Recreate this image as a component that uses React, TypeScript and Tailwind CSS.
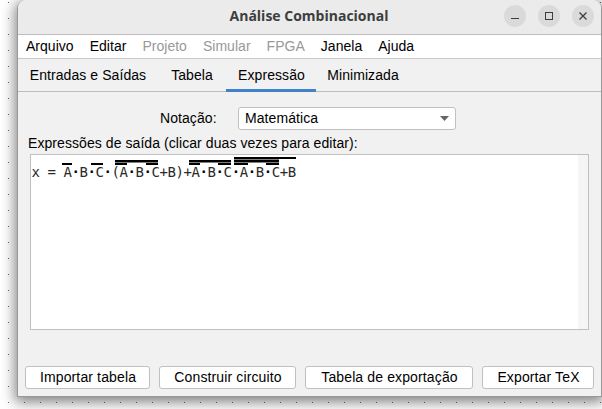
import type { ReactNode } from "react";

const menus = [
  { label: "Arquivo", enabled: true },
  { label: "Editar", enabled: true },
  { label: "Projeto", enabled: false },
  { label: "Simular", enabled: false },
  { label: "FPGA", enabled: false },
  { label: "Janela", enabled: true },
  { label: "Ajuda", enabled: true },
];

const tabs = [
  { label: "Entradas e Saídas", width: "w-[140px]", active: false },
  { label: "Tabela", width: "w-[68px]", active: false },
  { label: "Expressão", width: "w-[90px]", active: true },
  { label: "Minimizada", width: "w-[94px]", active: false },
];

const buttons = [
  { label: "Importar tabela", width: "w-[125px]" },
  { label: "Construir circuito", width: "w-[137px]" },
  { label: "Tabela de exportação", width: "w-[168px]" },
  { label: "Exportar TeX", width: "w-[112px]" },
];

const expression = "x = A·B·C·(A·B·C+B)+A·B·C·A·B·C+B";

// Negation bars: [x, y, width], relative to the expression line
const bars: [number, number, number][] = [
  [31, 8, 10],
  [60, 8, 12],
  [84, 5, 43],
  [84, 8, 12],
  [115, 8, 12],
  [158, 5, 42],
  [158, 8, 11],
  [187, 8, 13],
  [203, 2, 62],
  [203, 5, 45],
  [203, 8, 14],
  [235, 8, 13],
];

function Grid() {
  return (
    <svg className="absolute inset-0" width="602" height="409" shapeRendering="crispEdges">
      <defs>
        <pattern id="dots" width="16" height="16" patternUnits="userSpaceOnUse">
          <rect x="8" y="2" width="1" height="1" fill="#666" />
        </pattern>
      </defs>
      <rect width="602" height="409" fill="url(#dots)" />
    </svg>
  );
}

function WindowButton({ children }: { children: ReactNode }) {
  return (
    <button className="flex size-[22px] items-center justify-center rounded-full bg-[#dadada]">
      <svg width="22" height="22" fill="none" stroke="#3d3d3d">
        {children}
      </svg>
    </button>
  );
}

function Expression() {
  return (
    <div className="relative h-[30px] whitespace-pre pl-[0.4px] pt-[9px] font-['DejaVu_Sans_Mono',monospace] text-[14px] leading-[16px] tracking-[-0.428px] text-[#2a2a2a]">
      {expression.split(/(·)/).map((part, i) =>
        part === "·" ? (
          <b key={i} className="text-black">
            ·
          </b>
        ) : (
          part
        ),
      )}
      <svg className="absolute left-0 top-0" width="300" height="12" shapeRendering="crispEdges">
        <rect x="84" y="7" width="43" height="1" fill="#808080" />
        <rect x="158" y="7" width="42" height="1" fill="#808080" />
        <rect x="203" y="4" width="45" height="1" fill="#808080" />
        <rect x="203" y="7" width="45" height="1" fill="#808080" />
        {bars.map(([x, y, w], i) => (
          <rect key={i} x={x} y={y} width={w} height="2" fill="#000" />
        ))}
      </svg>
    </div>
  );
}

export default function App() {
  return (
    <div className="relative h-[409px] w-[602px] overflow-hidden bg-white pl-[17px] font-['Liberation_Sans',Arial,sans-serif] text-[14px] leading-[16px] tracking-[0.07px] text-black">
      <Grid />
      <div className="relative flex h-[397px] w-[585px] flex-col overflow-visible rounded-t-[9px] border border-t-0 border-[#989898] bg-[#f1f1f1] shadow-[0_3px_14px_2px_rgba(0,0,0,0.5)]">
        <header className="flex h-[35px] shrink-0 items-center rounded-t-[8px] border-b border-[#bdbdbd] bg-[#ebebeb] pb-[2px] pr-[7px]">
          <div className="w-[86px]" />
          <h1 className="flex-1 whitespace-nowrap pl-[10px] text-center font-['Open_Sans','Noto_Sans',sans-serif] text-[14px] font-bold tracking-normal text-[#3d3d3d]">
            Análise Combinacional
          </h1>
          <div className="flex gap-3">
            <WindowButton>
              <path d="M7 13.5h8" />
            </WindowButton>
            <WindowButton>
              <rect x="7.5" y="7.5" width="7" height="7" />
            </WindowButton>
            <WindowButton>
              <path d="M7.5 7.5l7 7M14.5 7.5l-7 7" strokeWidth="1.3" />
            </WindowButton>
          </div>
        </header>

        <nav className="flex h-6 shrink-0 gap-4 border-b border-[#c9c9c9] bg-white pl-2 pt-[3px] tracking-[0.025px]">
          {menus.map((m) => (
            <span key={m.label} className={m.enabled ? "text-black" : "text-[#999]"}>
              {m.label}
            </span>
          ))}
        </nav>

        <div className="flex h-[33px] shrink-0 border-b border-[#bdbdbd]">
          {tabs.map((t) => (
            <div
              key={t.label}
              className={`flex h-[33px] justify-center whitespace-nowrap pt-[8px] ${t.width} ${
                t.active ? "border-b-[3px] border-[#4083c9] pl-px" : ""
              }`}
            >
              {t.label}
            </div>
          ))}
        </div>

        <div className="flex h-[38px] shrink-0 items-end pl-[142px]">
          <span className="w-[78px] pb-1">Notação:</span>
          <div className="flex h-[23px] w-[218px] items-center justify-between rounded-[3px] border border-[#c0c0c0] bg-white pl-[6px] pr-[6px]">
            <span className="pb-[2px]">Matemática</span>
            <svg width="9" height="5">
              <path d="M0 0h9L4.5 5z" fill="#666" />
            </svg>
          </div>
        </div>

        <div className="mt-[5px] shrink-0 whitespace-nowrap pl-[10px]">
          Expressões de saída (clicar duas vezes para editar):
        </div>

        <div className="ml-3 mt-[3px] flex h-[176px] w-[559px] shrink-0 border border-[#c0c0c0] bg-white">
          <div className="flex-1">
            <Expression />
          </div>
          <div className="w-[10px] bg-[#f5f5f5]" />
        </div>

        <footer className="mt-9 flex gap-[9px] pl-[7px]">
          {buttons.map((b) => (
            <button
              key={b.label}
              className={`h-[23px] whitespace-nowrap rounded-[3px] border border-[#c0c0c0] bg-white pb-[2px] pl-px leading-[16px] tracking-[0.13px] ${b.width}`}
            >
              {b.label}
            </button>
          ))}
        </footer>
      </div>
    </div>
  );
}
